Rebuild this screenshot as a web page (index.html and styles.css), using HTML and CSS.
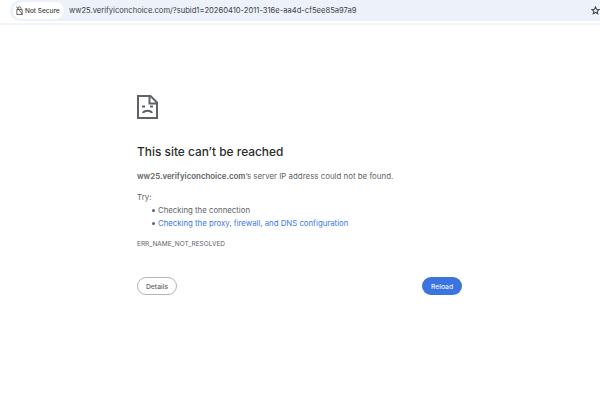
FILE: index.html
```html
<!DOCTYPE html>
<html lang="en">
<head>
    <meta charset="UTF-8">
    <title>ww25.verifyiconchoice.com</title>
    <link rel="stylesheet" href="styles.css">
</head>
<body>
    <div class="toolbar">
        <div class="omnibox">
            <div class="security-chip">
                <svg class="lock-icon" width="7" height="9" viewBox="0 0 8 10" fill="none" stroke="#444" stroke-width="0.9">
                    <rect x="1" y="4" width="6" height="5.5"/>
                    <path d="M2.2 4V2.6a1.8 1.8 0 0 1 3.6 0V4"/>
                    <path d="M0.3 0.5L7.7 9.5"/>
                </svg>
                <span>Not Secure</span>
            </div>
            <span class="url">ww25.verifyiconchoice.com/?subid1=20260410-2011-316e-aa4d-cf5ee85a97a9</span>
            <svg class="star-icon" width="9" height="9" viewBox="0 0 10 10" fill="none" stroke="#444" stroke-width="1.2">
                <path d="M5 1l1.2 2.6 2.8.3-2.1 1.9.6 2.8L5 7.2 2.5 8.6l.6-2.8L1 3.9l2.8-.3z"/>
            </svg>
        </div>
    </div>

    <div class="error-page">
        <div class="error-content">
            <svg class="sad-page" width="21" height="24" viewBox="0 0 21 24" fill="none" stroke="#5f6368" stroke-width="2">
                <path d="M1 1h12.5l6.5 6.5V23H1z"/>
                <path d="M12.5 1v7.5H20"/>
                <path d="M6 18c1-3 8-3 9 0"/>
                <path d="M5 11.5h3M13 11.5h3"/>
            </svg>
            <h1>This site can’t be reached</h1>
            <p class="summary"><strong>ww25.verifyiconchoice.com</strong>’s server IP address could not be found.</p>
            <p class="try">Try:</p>
            <ul class="suggestions">
                <li>Checking the connection</li>
                <li><a href="#">Checking the proxy, firewall, and DNS configuration</a></li>
            </ul>
            <p class="error-code">ERR_NAME_NOT_RESOLVED</p>
            <div class="buttons">
                <button class="details-button">Details</button>
                <button class="reload-button">Reload</button>
            </div>
        </div>
    </div>
</body>
</html>
```

FILE: styles.css
```css
* {
    box-sizing: border-box;
    margin: 0;
    padding: 0;
}

html, body {
    width: 600px;
    height: 400px;
    overflow: hidden;
}

body {
    background-color: #fff;
    font-family: 'Inter', 'Liberation Sans', sans-serif;
    color: #5f6368;
}

/* Address bar */
.toolbar {
    height: 25px;
    border-bottom: 2px solid #f3f4f6;
    background-color: #fff;
}

.omnibox {
    display: flex;
    align-items: center;
    height: 21px;
    margin-left: 10px;
    padding-left: 3px;
    padding-right: 0;
    background-color: #edf2fa;
    border-radius: 10px 0 0 10px;
}

.security-chip {
    display: flex;
    align-items: center;
    gap: 2px;
    height: 17px;
    width: 51px;
    flex: none;
    padding-left: 3px;
    background-color: #fff;
    border-radius: 9px;
    font-size: 6.5px;
    font-weight: 500;
    color: #3c4043;
    white-space: nowrap;
}

.lock-icon {
    flex: none;
}

.url {
    margin-left: 5px;
    font-size: 7.6px;
    color: #3c4043;
    white-space: nowrap;
}

.star-icon {
    margin-left: auto;
}

/* Error page */
.error-page {
    display: flex;
    justify-content: center;
    padding-top: 70px;
    padding-right: 1px;
}

.error-content {
    display: flex;
    flex-direction: column;
    width: 325px;
}

.sad-page {
    margin-bottom: 24px;
}

h1 {
    font-size: 11.9px;
    font-weight: 500;
    line-height: 18px;
    color: #2b2c2e;
    margin-bottom: 8px;
}

.summary {
    font-size: 7.9px;
    line-height: 14px;
    margin-bottom: 8px;
}

.summary strong {
    font-weight: 600;
}

.try {
    font-size: 7.9px;
    line-height: 13px;
}

.suggestions {
    padding-left: 15px;
    font-size: 7.8px;
    line-height: 13px;
    list-style: none;
}

.suggestions li {
    display: flex;
    align-items: center;
    gap: 3px;
}

.suggestions li::before {
    content: "";
    width: 3px;
    height: 3px;
    border-radius: 50%;
    background-color: #5f6368;
}

.suggestions a {
    color: #3b78e7;
    text-decoration: none;
}

.error-code {
    margin-top: 9px;
    font-size: 6.5px;
    line-height: 10px;
}

.buttons {
    display: flex;
    justify-content: space-between;
    margin-top: 28px;
}

button {
    height: 18px;
    width: 40px;
    border-radius: 9px;
    font-family: inherit;
    font-size: 6.8px;
    font-weight: 500;
}

.details-button {
    background-color: #fff;
    border: 1px solid #b5b5b5;
    color: #5f6368;
}

.reload-button {
    background-color: #3b74de;
    border: none;
    color: #e8eefb;
}
```
